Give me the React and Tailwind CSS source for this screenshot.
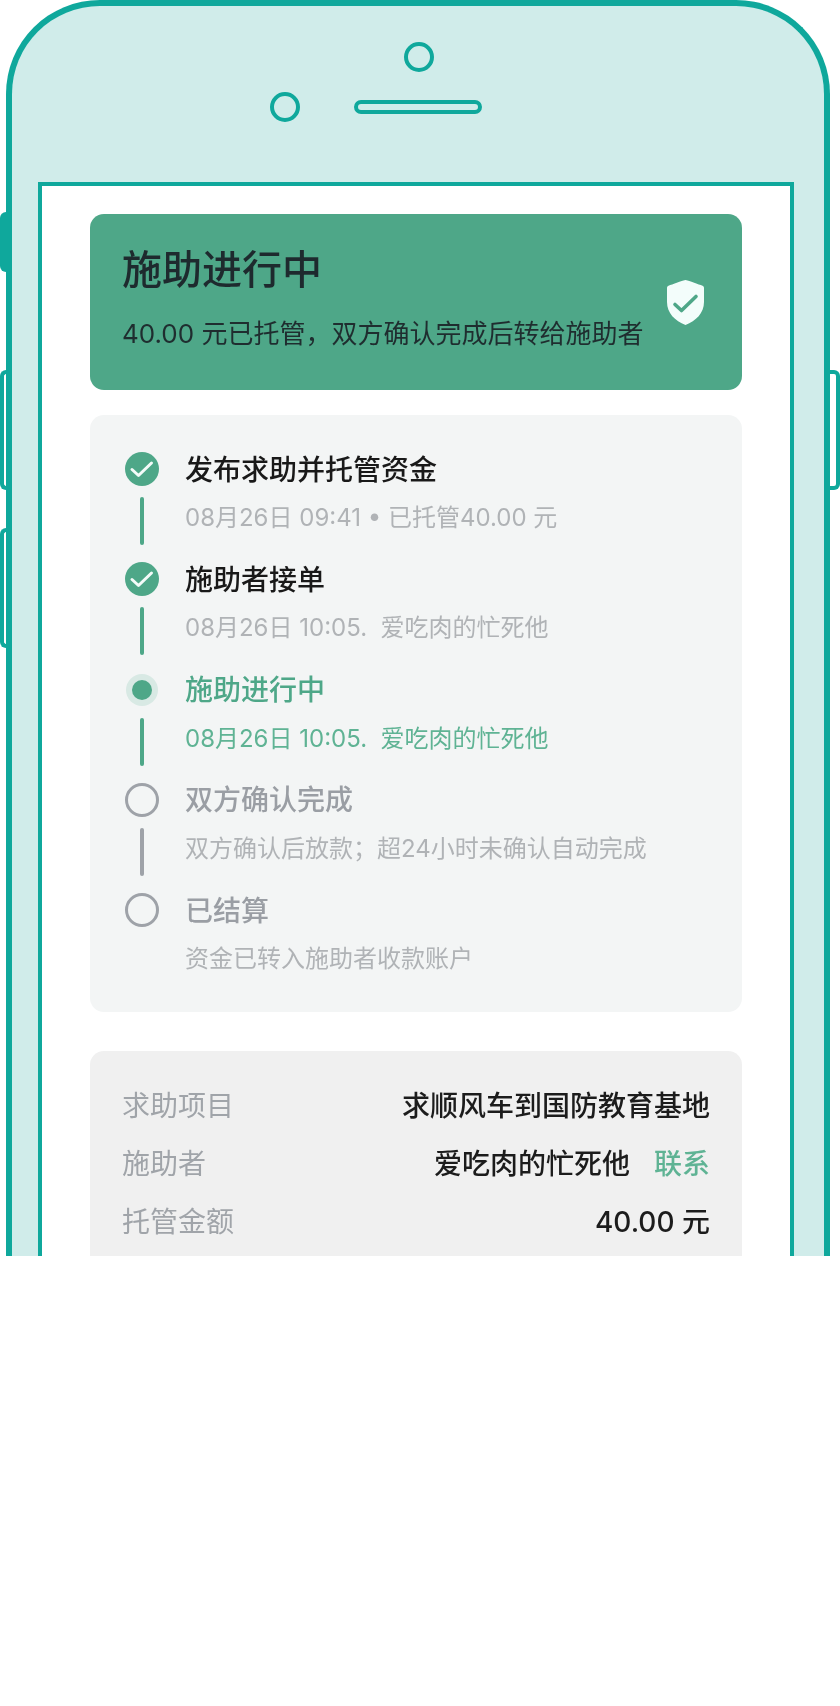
const FONT = '"Inter", "Noto Sans CJK SC", sans-serif';

const STEPS = [
  { status: 'done', title: '发布求助并托管资金', desc: '08月26日 09:41 • 已托管40.00 元' },
  { status: 'done', title: '施助者接单', desc: '08月26日 10:05.  爱吃肉的忙死他' },
  { status: 'active', title: '施助进行中', desc: '08月26日 10:05.  爱吃肉的忙死他' },
  { status: 'todo', title: '双方确认完成', desc: '双方确认后放款；超24小时未确认自动完成' },
  { status: 'todo', title: '已结算', desc: '资金已转入施助者收款账户' },
];

function StepIcon({ status }) {
  if (status === 'done') {
    return (
      <svg width="34" height="34" viewBox="0 0 34 34" className="shrink-0">
        <circle cx="17" cy="17" r="17" fill="#4ea788" />
        <path d="M7 17.5 L13.5 23.5 L26.5 11" fill="none" stroke="#f4fbf9" strokeWidth="3" strokeLinecap="round" strokeLinejoin="round" />
      </svg>
    );
  }
  if (status === 'active') {
    return (
      <div className="my-px flex h-8 w-8 shrink-0 items-center justify-center rounded-full bg-[#d8e9e4]">
        <div className="h-5 w-5 rounded-full bg-[#4ea788]" />
      </div>
    );
  }
  return <div className="h-[34px] w-[34px] shrink-0 rounded-full border-[3px] border-[#9ea2a8]" />;
}

function Step({ step, last }) {
  const titleClass = {
    done: 'text-[#191919]',
    active: 'text-[#4ea788]',
    todo: 'text-[#9a9ea4]',
  }[step.status];
  const descClass = step.status === 'active' ? 'text-[#5fb394]' : 'text-[#b0b3b6]';

  return (
    <div className={`flex gap-[26px] ${last ? '' : 'h-[110.25px]'}`}>
      <div className="flex w-[34px] flex-col items-center">
        <StepIcon status={step.status} />
        {!last ? (
          <div
            className={`mt-[11px] h-[48px] w-1 rounded-sm ${
              step.status === 'todo' ? 'bg-[#9ea2a8]' : 'bg-[#4ea788]'
            }`}
          />
        ) : null}
      </div>
      <div className="pt-[0.5px]">
        <p className={`text-[28px] leading-[34px] font-medium ${titleClass}`}>{step.title}</p>
        <p className={`mt-[14.5px] text-[24px] leading-[34px] whitespace-pre ${descClass}`}>{step.desc}</p>
      </div>
    </div>
  );
}

function InfoRow({ label, children }) {
  return (
    <div className="flex h-[58px] items-center justify-between">
      <span className="text-[28px] text-[#a0a4a9]">{label}</span>
      <div className="flex items-center gap-6 text-[28px] font-medium text-[#1c1c1c]">{children}</div>
    </div>
  );
}

export default function App() {
  return (
    <div className="relative h-[1706px] w-[840px] overflow-hidden bg-white" style={{ fontFamily: FONT }}>
      {/* side buttons */}
      <div className="absolute left-0 top-[212px] h-[60px] w-[6px] rounded-l-lg bg-[#0fa89c]" />
      <div className="absolute left-0 top-[370px] h-[120px] w-[6px] rounded-l-md border-y-4 border-l-4 border-[#0fa89c]" />
      <div className="absolute left-0 top-[528px] h-[120px] w-[6px] rounded-l-md border-y-4 border-l-4 border-[#0fa89c]" />
      <div className="absolute left-[830px] top-[370px] h-[120px] w-[10px] rounded-r-md border-y-4 border-r-4 border-[#0fa89c]" />

      <div className="ml-[6px] h-[1256px] w-[824px] overflow-hidden rounded-t-[94px] border-x-[6px] border-t-[6px] border-[#0fa89c] bg-[#d0ecea]">
        <div className="h-[176px] pt-[36px]">
          <div className="ml-[392px] h-[30px] w-[30px] rounded-full border-4 border-[#0fa89c]" />
          <div className="ml-[258px] mt-[20px] flex items-center gap-[54px]">
            <div className="h-[30px] w-[30px] rounded-full border-4 border-[#0fa89c]" />
            <div className="h-[14px] w-[128px] rounded-full border-4 border-[#0fa89c]" />
          </div>
        </div>

        <div className="ml-[26px] h-[1074px] w-[756px] border-x-4 border-t-4 border-[#0fa89c] bg-white px-[48px] pt-[28px]">
          <div className="blur-[0.5px]">
            <div className="flex h-[176px] items-center justify-between rounded-[14px] bg-[#4ea788] pl-[32px] pr-[38px]">
              <div className="pb-2">
                <h1 className="text-[40px] leading-[52px] font-medium text-[#1e2a2e]">施助进行中</h1>
                <p className="mt-5 text-[26px] leading-[36px] text-[#1f2d2f]">40.00 元已托管，双方确认完成后转给施助者</p>
              </div>
              <svg width="37" height="45" viewBox="0 0 37 45" className="shrink-0">
                <path d="M18.5 0 C20 0 33 5 35 5.5 C36.5 6 37 7 37 8 V22 C37 33 29 41 18.5 45 C8 41 0 33 0 22 V8 C0 7 0.5 6 2 5.5 C4 5 17 0 18.5 0 Z" fill="#f3fdfb" />
                <path d="M8 24.5 L14.5 30.5 L29 16.5" fill="none" stroke="#4ea788" strokeWidth="3.6" strokeLinecap="round" strokeLinejoin="round" />
              </svg>
            </div>

            <div className="mt-[25px] rounded-[14px] bg-[#f3f5f5] pb-[36px] pl-[35px] pt-[37px]">
              {STEPS.map((step, i) => (
                <Step key={step.title} step={step} last={i === STEPS.length - 1} />
              ))}
            </div>

            <div className="mt-[39px] h-[300px] rounded-[14px] bg-[#f0f0f0] px-[32px] pt-[26px]">
              <InfoRow label="求助项目">求顺风车到国防教育基地</InfoRow>
              <InfoRow label="施助者">
                <span>爱吃肉的忙死他</span>
                <span className="text-[#5fb394]">联系</span>
              </InfoRow>
              <InfoRow label="托管金额">40.00 元</InfoRow>
            </div>
          </div>
        </div>
      </div>
    </div>
  );
}
